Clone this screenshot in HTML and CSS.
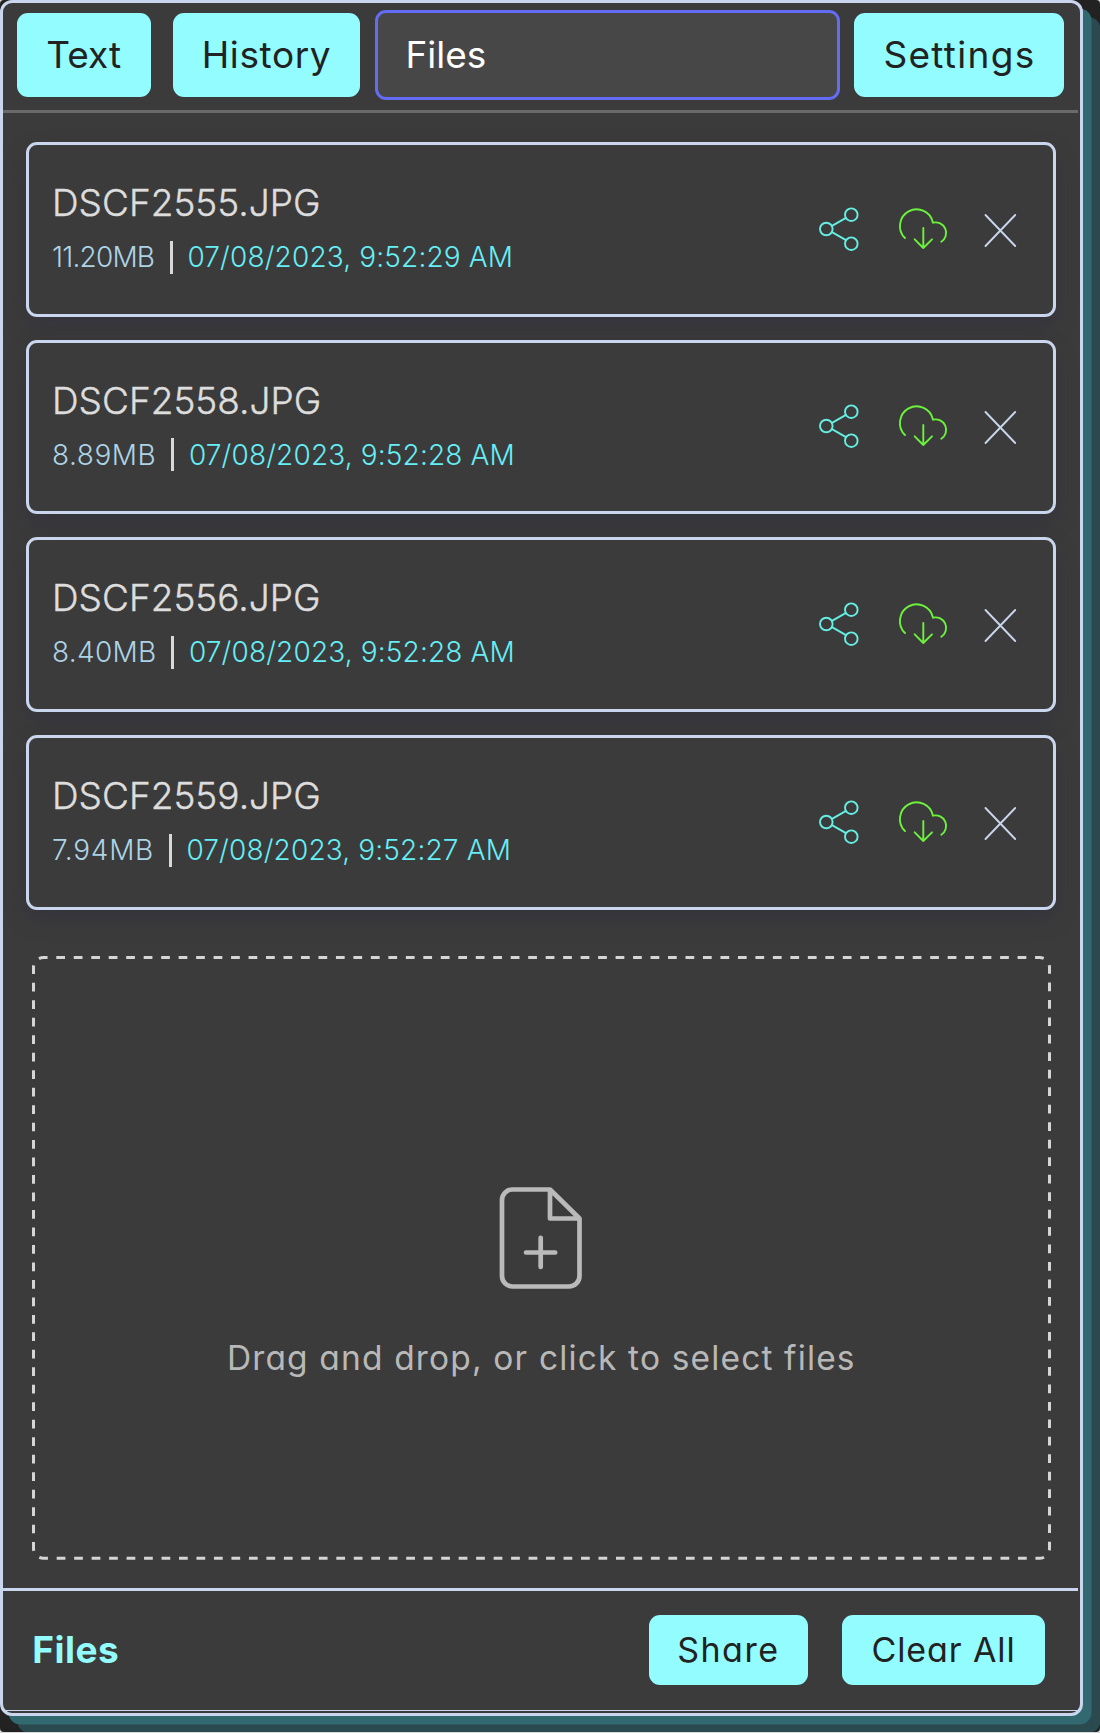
FILE: index.html
```
<!DOCTYPE html>
<html lang="en">
<head>
<meta charset="utf-8">
<title>Files</title>
<link rel="stylesheet" href="styles.css">
</head>
<body>
<svg class="defs" aria-hidden="true">
  <symbol id="share" viewBox="0 0 48 48">
    <circle cx="11.3" cy="24" r="6.3"/><circle cx="36.3" cy="9.7" r="6.3"/><circle cx="36.3" cy="38.7" r="6.3"/>
    <path d="M17 20.9 31 12.9M17 27.1 31 35.1"/>
  </symbol>
  <symbol id="download" viewBox="0 0 60 48">
    <path d="M12 33A16.7 16.7 0 1 1 40 17.7A10.5 10.5 0 0 1 48.3 36.7M30.3 23V43M21.7 34.3 30.3 43 39 34.3"/>
  </symbol>
  <symbol id="remove" viewBox="0 0 34 48">
    <path d="M2.5 10 32.2 41M32.2 10 2.5 41"/>
  </symbol>
</svg>
<div class="page">
  <main class="window">
    <nav class="tabs">
      <button class="btn tab text">Text</button>
      <button class="btn tab history">History</button>
      <div class="tab current">Files</div>
      <button class="btn tab settings">Settings</button>
    </nav>
    <section class="files">
      <article class="card">
        <div class="info">
          <div class="name">DSCF2555.JPG</div>
          <div class="meta"><span class="size s1">11.20MB</span><i class="bar"></i><span class="date">07/08/2023, 9:52:29 AM</span></div>
        </div>
        <div class="actions"><svg class="share"><use href="#share"/></svg><svg class="download"><use href="#download"/></svg><svg class="remove"><use href="#remove"/></svg></div>
      </article>
      <article class="card">
        <div class="info">
          <div class="name">DSCF2558.JPG</div>
          <div class="meta"><span class="size s2">8.89MB</span><i class="bar"></i><span class="date">07/08/2023, 9:52:28 AM</span></div>
        </div>
        <div class="actions"><svg class="share"><use href="#share"/></svg><svg class="download"><use href="#download"/></svg><svg class="remove"><use href="#remove"/></svg></div>
      </article>
      <article class="card">
        <div class="info">
          <div class="name">DSCF2556.JPG</div>
          <div class="meta"><span class="size s3">8.40MB</span><i class="bar"></i><span class="date">07/08/2023, 9:52:28 AM</span></div>
        </div>
        <div class="actions"><svg class="share"><use href="#share"/></svg><svg class="download"><use href="#download"/></svg><svg class="remove"><use href="#remove"/></svg></div>
      </article>
      <article class="card">
        <div class="info">
          <div class="name">DSCF2559.JPG</div>
          <div class="meta"><span class="size s4">7.94MB</span><i class="bar"></i><span class="date">07/08/2023, 9:52:27 AM</span></div>
        </div>
        <div class="actions"><svg class="share"><use href="#share"/></svg><svg class="download"><use href="#download"/></svg><svg class="remove"><use href="#remove"/></svg></div>
      </article>
    </section>
    <section class="dropzone">
      <svg class="outline" viewBox="0 0 1019 604"><rect x="1.5" y="1.5" width="1016" height="600.8" rx="10" pathLength="3220" stroke-dasharray="8.75 8.75" stroke-dashoffset="4.7"/></svg>
      <svg class="file" viewBox="0 0 84 104">
        <path d="M51 4.5H13.5A10.5 10.5 0 0 0 3 15V91A10.5 10.5 0 0 0 13.5 101.5H70A10.5 10.5 0 0 0 80.5 91V33.5ZM51 4.5V33.5H80.5M27 67.5H56.2M41.7 52.8V82"/>
      </svg>
      <p class="hint">Drag and drop, or click to select files</p>
    </section>
    <footer class="footer">
      <h1 class="title">Files</h1>
      <button class="btn small do-share">Share</button>
      <button class="btn small clear">Clear All</button>
    </footer>
  </main>
</div>
</body>
</html>
```
FILE: styles.css
```
* { box-sizing: border-box; }
html { background: #d8d8d8; }
body {
  margin: 0;
  font-family: Inter, sans-serif;
  font-feature-settings: "cv11";
}
.defs { display: none; }
.page {
  width: 1100px;
  height: 1732.4px;
  background: #222;
  border-radius: 4px;
  overflow: hidden;
}
.window {
  display: flex;
  flex-direction: column;
  width: 1082.6px;
  height: 1715.6px;
  background: #3b3b3b;
  border: 3px solid #cad6ed;
  border-radius: 12px;
  box-shadow: 8.5px 8.5px 0 #326971, 17.4px 17px 0 #2a4a50;
}
.tabs {
  display: flex;
  align-items: flex-start;
  height: 110.4px;
  margin-right: 2px;
  padding: 7px 10px 0 14.3px;
  border-bottom: 3px solid #6a6a6a;
}
.btn {
  flex: none;
  padding: 0;
  border: 0;
  border-radius: 11px;
  background: #93fcff;
  color: #222;
  font: inherit;
  font-size: 34px;
  white-space: nowrap;
}
.tab { height: 84.4px; margin-top: 2.6px; font-size: 37px; }
.text { width: 133.7px; margin-right: 22px; padding-right: 1px; }
.history { width: 187px; letter-spacing: .6px; }
.current {
  flex: none;
  width: 465.6px;
  height: 90px;
  margin: 0 14.3px 0 14.6px;
  padding-left: 27.8px;
  border: 3px solid #646cf5;
  border-radius: 11px;
  background: #474747;
  color: #fff;
  line-height: 84px;
}
.current.tab { margin-top: 0; height: 90px; }
.settings { width: 210px; letter-spacing: 1.3px; }
.files {
  display: flex;
  flex-direction: column;
  gap: 23.1px;
  padding: 28.9px 23.3px 0 23px;
}
.card {
  display: flex;
  justify-content: space-between;
  height: 174.5px;
  padding: 31px 36.5px 0 23px;
  border: 3px solid #cad6ed;
  border-radius: 11px;
  background: #3b3b3b;
  box-shadow: 0 10px 22px -2px rgba(42, 40, 65, .4);
}
.name {
  color: #ddd;
  font-size: 37px;
  font-weight: 300;
  line-height: 54px;
  -webkit-text-stroke: .4px;
}
.meta {
  display: flex;
  align-items: center;
  color: #66eef5;
  font-size: 28px;
  font-weight: 300;
  line-height: 54px;
}
.size { width: 102px; color: #add3e6; white-space: nowrap; }
.s1 { letter-spacing: -.8px; }
.s2 { width: 103.5px; letter-spacing: .5px; }
.s3 { width: 103.5px; letter-spacing: .3px; }
.s4 { width: 101px; letter-spacing: .7px; }
.bar { width: 3.4px; height: 33px; margin: 0 14.5px 0 15.5px; background: #d8d8d8; }
.date { letter-spacing: .15px; white-space: nowrap; }
.actions { display: flex; gap: 30px; margin-top: 28.5px; }
.actions svg { height: 48px; fill: none; stroke-width: 1.9; stroke-linecap: round; stroke-linejoin: round; }
.share { width: 48px; stroke: #66eee2; }
.download { width: 60px; stroke: #6cf23c; }
.remove { width: 34px; stroke: #c9d5ec; }
.dropzone {
  position: relative;
  display: flex;
  flex-direction: column;
  align-items: center;
  width: 1019px;
  height: 604px;
  margin: 46px 0 0 28.8px;
  padding-top: 229.5px;
}
.outline { position: absolute; inset: 0; fill: none; stroke: #d5d5d5; stroke-width: 3; }
.file { width: 84px; height: 104px; fill: none; stroke: #bababa; stroke-width: 4.7; stroke-linecap: round; stroke-linejoin: round; }
.hint {
  margin: 41.5px 0 0;
  color: #b8b8b8;
  font-size: 33.5px;
  letter-spacing: 1.15px;
  line-height: 54px;
  white-space: nowrap;
}
.footer {
  display: flex;
  align-items: flex-start;
  height: 123.4px;
  margin: auto 2px 1.4px 0;
  padding: 24px 32.8px 0 29.3px;
  border-top: 3px solid #cad6ed;
  border-bottom: 1px solid #cad6ed;
}
.title { margin: 0 auto 0 0; color: #93fcff; font-size: 37px; font-weight: 700; letter-spacing: .5px; line-height: 70px; }
.small { height: 69.7px; padding-bottom: 1px; }
.do-share { width: 158.6px; margin-right: 34.7px; letter-spacing: 1.5px; }
.clear { width: 202.5px; letter-spacing: .9px; }
```
